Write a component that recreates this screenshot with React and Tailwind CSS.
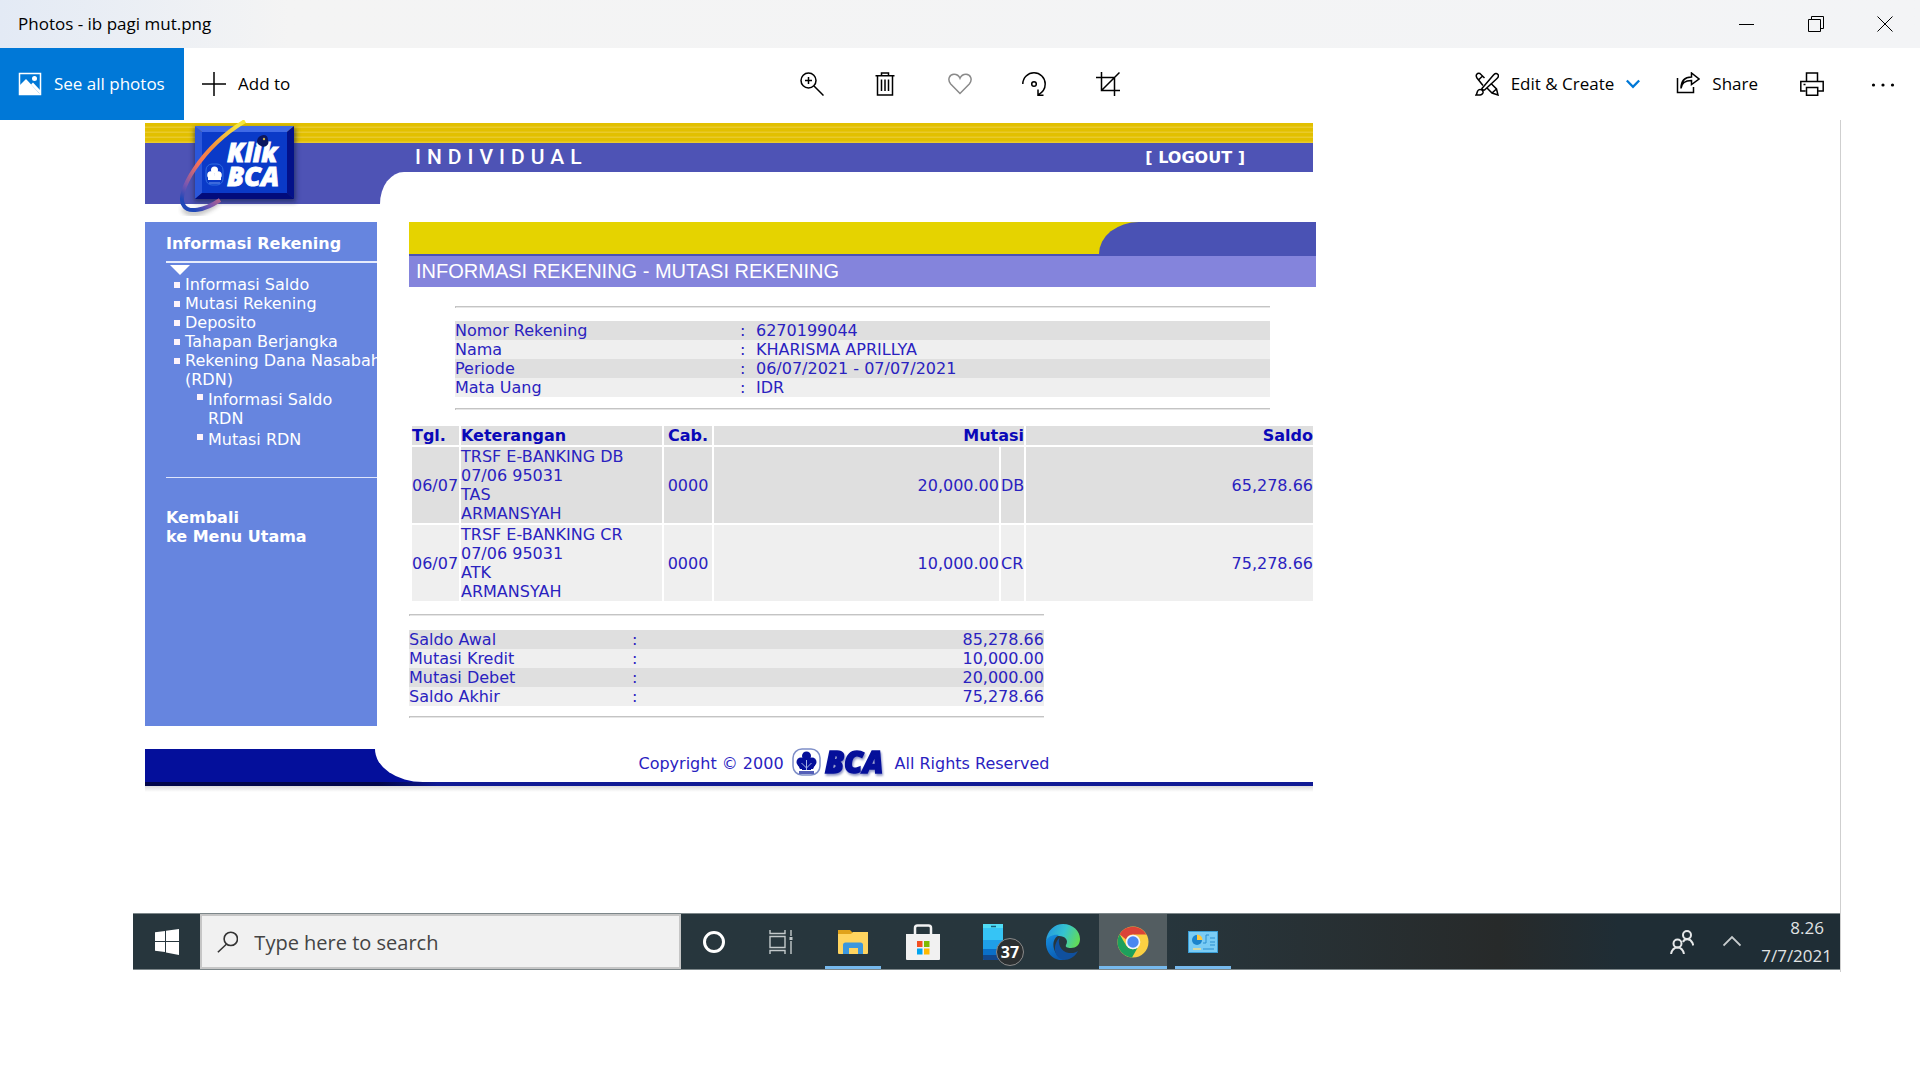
import React from "react";

const menuItems = ["Informasi Saldo", "Mutasi Rekening", "Deposito", "Tahapan Berjangka"];

const accountInfo = [
  ["Nomor Rekening", "6270199044"],
  ["Nama", "KHARISMA APRILLYA"],
  ["Periode", "06/07/2021 - 07/07/2021"],
  ["Mata Uang", "IDR"],
];

const mutations = [
  { date: "06/07", lines: ["TRSF E-BANKING DB", "07/06 95031", "TAS", "ARMANSYAH"], branch: "0000", amount: "20,000.00", type: "DB", balance: "65,278.66" },
  { date: "06/07", lines: ["TRSF E-BANKING CR", "07/06 95031", "ATK", "ARMANSYAH"], branch: "0000", amount: "10,000.00", type: "CR", balance: "75,278.66" },
];

const summary = [
  ["Saldo Awal", "85,278.66"],
  ["Mutasi Kredit", "10,000.00"],
  ["Mutasi Debet", "20,000.00"],
  ["Saldo Akhir", "75,278.66"],
];

const STRIPE = "odd:bg-[#dfdfdf] even:bg-[#efefef]";
const CELL_STRIPE = "*:p-0 odd:*:bg-[#dfdfdf] even:*:bg-[#efefef]";

function Icon({ children, className = "", size = 24, box = "0 0 24 24", width = 1.5 }) {
  return (
    <svg width={size} height={size} viewBox={box} fill="none" stroke="currentColor" strokeWidth={width} className={className} aria-hidden="true">
      {children}
    </svg>
  );
}

function TitleBar() {
  return (
    <header className="flex h-12 items-center bg-linear-to-r from-[#e3eaf5] via-[#f4f4f4] via-15% to-[#f3f4f6] pr-px pl-[18px] text-[17px]">
      <h1 className="flex-1">Photos - ib pagi mut.png</h1>
      <button aria-label="Minimize" className="flex h-12 w-[69px] items-center justify-center">
        <Icon size={16} box="0 0 16 16" width={1}><path d="M0 8.5h15" /></Icon>
      </button>
      <button aria-label="Restore" className="flex h-12 w-[69px] items-center justify-center">
        <Icon size={16} box="0 0 16 16" width={1}><path d="M.5 3.5h12v12H.5zM3.500 3.500v-3h12v12h-3" /></Icon>
      </button>
      <button aria-label="Close" className="flex h-12 w-[69px] items-center justify-center">
        <Icon size={16} box="0 0 16 16" width={1}><path d="M.5.5l15 15M15.500.5l-15 15" /></Icon>
      </button>
    </header>
  );
}

function Toolbar() {
  return (
    <nav className="grid h-[72px] grid-cols-[1fr_auto_1fr] items-center bg-white text-[17px]">
      <div className="flex h-full items-center">
        <button className="flex h-full w-[184px] items-center gap-3 bg-[#0078d7] pl-[18px] text-white">
          <Icon>
            <path d="M1.500 1.500h21v21h-21z" strokeWidth="1.500" />
            <path d="M2 13l6-6 14 15H2z" fill="currentColor" stroke="none" />
            <path d="M13 12.500l2-2 7 7.500v4z" fill="currentColor" stroke="none" />
            <circle cx="16.500" cy="6.500" r="2.500" fill="currentColor" stroke="none" />
          </Icon>
          See all photos
        </button>
        <button className="flex h-full items-center gap-3 px-[18px]">
          <Icon width={1.5}><path d="M0 12h24M12 0v24" /></Icon>
          Add to
        </button>
      </div>
      <div className="flex items-center gap-[50px]">
        <button aria-label="Zoom">
          <Icon><circle cx="8.500" cy="8.500" r="7.500" /><path d="M14 14l9.500 9.500M5 8.500h7M8.500 5v7" /></Icon>
        </button>
        <button aria-label="Delete">
          <Icon><path d="M1.500 3.800h19M7.500 3.500V1h7v2.500M3.500 4v19h15V4M7.500 7.500V19M11 7.500V19M14.500 7.500V19" /></Icon>
        </button>
        <button aria-label="Add to favorites" className="text-[#8a8a8a]">
          <Icon><path d="M12 21.500L2.700 12C-1 7.500 1.500 2.300 6 2.300c3 0 5 1.700 6 4 1-2.300 3-4 6-4 4.500 0 7 5.200 3.300 9.700z" /></Icon>
        </button>
        <button aria-label="Rotate">
          <Icon><path d="M.8 12C.8 5.500 6 .8 12 .8S23.200 5.800 23.200 12c0 4.500-2.700 8.500-7 10.800M16 17.500v5.700h5.500" /><circle cx="12" cy="12" r="2.300" /></Icon>
        </button>
        <button aria-label="Crop">
          <Icon><path d="M0 5.500h18.500V24M5.500 0v18.500H24M5.500 18.500L23.500.5" /></Icon>
        </button>
      </div>
      <div className="flex items-center justify-end pr-[25px]">
        <button className="flex items-center gap-3">
          <Icon width={1.5}>
            <path d="M8 13.500L2 6C0 3 2.500.3 5 1.500L9.500 6M12 16l5 5 6 2-1.500-6-5.500-5.500M4 7.500L7.500 4M17 21l4.500-4" />
            <path d="M6.500 17L18.500 3c1.500-1.700 3-2 4.200-.8 1.200 1.200 1 2.800-.7 4.300L9 18.500M6.500 17L9 18.500M1 23c1.500-1.500.5-3.500 2.500-5 2-1.500 5 .5 4.500 2.700C7.500 22.500 4 23.300 1 23z" />
          </Icon>
          <span>Edit &amp; Create</span>
          <Icon size={14} box="0 0 12 12" width={2} className="text-[#0078d7]"><path d="M.7 3l5.300 5.500L11.300 3" /></Icon>
        </button>
        <button className="ml-9 flex items-center gap-3">
          <Icon><path d="M1.500 6v14.500h16V15" /><path d="M5 16.500c.5-5.500 4-8 10.500-8v4L23 7l-7.500-6v4C8 5 5 9.500 5 16.500z" /></Icon>
          Share
        </button>
        <button aria-label="Print" className="ml-[42px]">
          <Icon><path d="M6.500 9V1h11v8M5.500 19H.8V9.500h22.400V19h-4.700M6.500 15.500h11.200V23.200H6.500zM3.500 12.500h2" /></Icon>
        </button>
        <button aria-label="More" className="ml-[47px]">
          <Icon><g fill="currentColor" stroke="none"><circle cx="2.500" cy="13" r="1.600" /><circle cx="12" cy="13" r="1.600" /><circle cx="21.500" cy="13" r="1.600" /></g></Icon>
        </button>
      </div>
    </nav>
  );
}

function KlikLogo() {
  return (
    <svg width="126" height="100" viewBox="0 0 126 100" className="absolute -top-[3px] left-[33px]" role="img" aria-label="Klik BCA">
      <defs>
        <linearGradient id="orbit" x1="0.800" y1="0" x2="0.200" y2="1">
          <stop offset="0" stopColor="#f5e63c" />
          <stop offset="0.350" stopColor="#f5913c" />
          <stop offset="0.600" stopColor="#f5705a" />
          <stop offset="0.850" stopColor="#7a56b0" />
          <stop offset="1" stopColor="#1f48b8" />
        </linearGradient>
        <filter id="soft" x="-20%" y="-20%" width="140%" height="140%"><feGaussianBlur stdDeviation="2.500" /></filter>
      </defs>
      <rect x="16" y="8" width="102" height="74" fill="#16204a" opacity="0.600" filter="url(#soft)" />
      <path d="M5 88c6 9 18 6 34-5" fill="none" stroke="#444" strokeWidth="4" opacity="0.450" filter="url(#soft)" />
      <path d="M17 6h99l-7 6H24z" fill="#3f6ae6" />
      <path d="M17 6v73l7-6V12z" fill="#2b57da" />
      <path d="M116 6v73l-7-6V12z" fill="#03118a" />
      <path d="M17 79h99l-7-6H24z" fill="#020c7c" />
      <path d="M24 12h85v61H24z" fill="#0a3ac8" />
      <path d="M67 1C24 27-4 74 6 86c4 7 20 5 36-6" fill="none" stroke="url(#orbit)" strokeWidth="4" />
      <g fill="#fff" stroke="#fff" strokeWidth="0.800" fontFamily="'Open Sans', sans-serif" fontWeight="800" fontStyle="italic">
        <text x="49" y="42" fontSize="26">Klik</text>
        <text x="49" y="66" fontSize="27">BCA</text>
      </g>
      <path d="M80 18c5-5 10-3 10 2 2 5-3 8-7 6s-5-4-3-8z" fill="#0b1660" />
      <circle cx="86" cy="19" r="1.200" fill="#ccb34a" />
      <rect x="28" y="44" width="17" height="21" rx="6" fill="none" stroke="#2f6ce0" />
      <g fill="#fff"><circle cx="36.500" cy="50" r="3.500" /><circle cx="33" cy="55" r="3.800" /><circle cx="40" cy="55" r="3.800" /><path d="M30 56h13v4H30z" /></g>
      <path d="M31 63h11" stroke="#6f9af0" />
    </svg>
  );
}

function BankHeader() {
  return (
    <div className="relative mr-[3px]">
      <div className="h-5 bg-[repeating-linear-gradient(to_bottom,#e2c000_0px,#e2c000_3px,#e9ca2c_4px,#e9ca2c_5px)]" />
      <div className="flex h-[29px] items-center bg-[#4e53b5] pr-[68px] pl-[270px] text-white">
        <span className="flex-1 font-[Roboto] text-[21px] leading-none font-medium tracking-[6px]">INDIVIDUAL</span>
        <a href="#logout" className="font-['DejaVu_Sans'] text-base leading-[19px] font-bold">[ LOGOUT ]</a>
      </div>
      <div className="flex h-8 bg-[#4e53b5]">
        <div className="w-[235px]" />
        <div className="flex-1 rounded-tl-[24px_32px] bg-white" />
      </div>
      <KlikLogo />
    </div>
  );
}

function Bullet({ className = "mt-[7px]" }) {
  return <span className={`size-1.5 shrink-0 bg-[#fdf3fb] ${className}`} />;
}

function Sidebar() {
  return (
    <aside className="w-[232px] shrink-0 bg-[#6685df] pt-3 pl-[21px] text-white">
      <h2 className="font-bold">Informasi Rekening</h2>
      <div className="mt-2 h-[2px] bg-[#e6ecfc]" />
      <svg width="20" height="10" viewBox="0 0 20 10" className="mt-[2px] ml-1" aria-hidden="true"><path d="M0 0h20L10 10z" fill="#fff" /></svg>
      <ul className="pl-2 whitespace-nowrap">
        {menuItems.map((item) => (
          <li key={item} className="flex gap-[5px]"><Bullet /><a href="#menu">{item}</a></li>
        ))}
        <li className="flex gap-[5px]"><Bullet /><a href="#menu">Rekening Dana Nasabah<br />(RDN)</a></li>
      </ul>
      <ul className="flex flex-col gap-[2px] pt-px pl-[31px]">
        <li className="flex gap-[5px]"><Bullet className="mt-1" /><a href="#menu">Informasi Saldo<br />RDN</a></li>
        <li className="flex gap-[5px]"><Bullet className="mt-1" /><a href="#menu">Mutasi RDN</a></li>
      </ul>
      <div className="mt-7 h-px bg-[#dfe6fb]" />
      <a href="#back" className="mt-[30px] block font-bold">Kembali<br />ke Menu Utama</a>
    </aside>
  );
}

function Rule({ className }) {
  return <hr className={`h-[2px] border-0 border-t border-l border-[#c4c4c4] bg-[#e6e6e6] ${className}`} />;
}

function Statement() {
  return (
    <main className="ml-8 min-w-0 flex-1 pb-2 text-[#2a22bf]">
      <div className="flex h-8 bg-[#e5d300]">
        <div className="flex-1" />
        <div className="w-[217px] rounded-tl-[40px_32px] bg-[#4a52b4]" />
      </div>
      <div className="h-[33px] border-t-2 border-[#4a52b4] bg-[#8484dc] pl-[7px]">
        <h2 className="font-['Liberation_Sans'] text-xl leading-[30px] text-white">INFORMASI REKENING - MUTASI REKENING</h2>
      </div>

      <div className="mr-[46px] ml-[46px]">
        <Rule className="mt-[19px]" />
        <table className="mt-[13px] w-full border-collapse">
          <tbody>
            {accountInfo.map(([label, value]) => (
              <tr key={label} className={STRIPE}>
                <th scope="row" className="w-[285px] p-0 text-left font-normal">{label}</th>
                <td className="w-4 p-0">:</td>
                <td className="p-0">{value}</td>
              </tr>
            ))}
          </tbody>
        </table>
        <Rule className="mt-[11px]" />
      </div>

      <div className="mt-[14px] px-px">
        <table className="w-full table-fixed border-separate border-spacing-[2px]">
          <colgroup>
            <col className="w-[47px]" />
            <col className="w-[201px]" />
            <col className="w-12" />
            <col />
            <col className="w-[23px]" />
            <col className="w-[287px]" />
          </colgroup>
          <thead className="text-[#0a08b8]">
            <tr className="*:bg-[#dfdfdf] *:p-0">
              <th className="text-left">Tgl.</th>
              <th className="text-left">Keterangan</th>
              <th>Cab.</th>
              <th colSpan={2} className="text-right">Mutasi</th>
              <th className="text-right">Saldo</th>
            </tr>
          </thead>
          <tbody>
            {mutations.map((m) => (
              <tr key={m.type} className={`${STRIPE} *:bg-inherit *:p-0`}>
                <td>{m.date}</td>
                <td>{m.lines.map((line) => <div key={line}>{line}</div>)}</td>
                <td className="text-center">{m.branch}</td>
                <td className="text-right">{m.amount}</td>
                <td>{m.type}</td>
                <td className="text-right">{m.balance}</td>
              </tr>
            ))}
          </tbody>
        </table>
      </div>

      <div className="w-[70%]">
        <Rule className="mt-[11px]" />
        <table className="mt-[14px] w-full border-collapse">
          <tbody>
            {summary.map(([label, value]) => (
              <tr key={label} className={STRIPE}>
                <th scope="row" className="w-[223px] p-0 text-left font-normal">{label}</th>
                <td className="p-0">:</td>
                <td className="p-0 text-right">{value}</td>
              </tr>
            ))}
          </tbody>
        </table>
        <Rule className="mt-[10px]" />
      </div>
    </main>
  );
}

function BcaMark() {
  return (
    <svg width="98" height="34" viewBox="0 0 98 34" role="img" aria-label="BCA">
      <rect x="1" y="3" width="27" height="26" rx="9" fill="#fff" stroke="#7f8fc8" strokeWidth="1.500" />
      <g fill="#050f9a">
        <circle cx="14.500" cy="10" r="4.500" /><circle cx="9" cy="16" r="4.500" /><circle cx="20" cy="16" r="4.500" />
        <path d="M10 12h9v12h-9zM6 19h17l-2 4H8z" /><path d="M7 25h15v3H7z" fill="#5560b8" />
      </g>
      <path d="M14.500 24V14M14.500 22l-5-5M14.500 22l5-5" stroke="#a9b5e6" strokeWidth="1" />
      <text x="33" y="27" fontSize="30" fontWeight="800" fontStyle="italic" fontFamily="'Open Sans', sans-serif" fill="#050f9a" stroke="#050f9a" strokeWidth="1.500" className="drop-shadow-[1px_2px_1px_#8c93c4]">BCA</text>
    </svg>
  );
}

function BankFooter() {
  return (
    <footer className="mt-[23px] mr-[3px]">
      <div className="flex h-[33px] bg-[#040f9b]">
        <div className="w-[230px]" />
        <div className="flex flex-1 items-center justify-center rounded-bl-[48px_33px] bg-white pb-[5px] text-[#2a22bf]">
          <p className="flex items-center whitespace-nowrap">
            <span className="mr-2">Copyright © 2000</span>
            <BcaMark />
            <span className="ml-[5px]">All Rights Reserved</span>
          </p>
        </div>
      </div>
      <div className="h-1 bg-linear-to-r from-[#02064a] from-20% to-[#101a94] to-25%" />
      <div className="h-1.5 bg-linear-to-b from-[#dcdcdc] to-white" />
    </footer>
  );
}

function TaskButton({ label, active, open, children }) {
  return (
    <button aria-label={label} className={`relative flex h-full w-[68px] items-center justify-center ${active ? "bg-[#535d61]" : ""}`}>
      {children}
      {open && <span className={`absolute bottom-0 h-[3px] bg-[#76b9ed] ${active ? "inset-x-0" : "inset-x-[6px]"}`} />}
    </button>
  );
}

function Taskbar() {
  return (
    <div className="mt-[121px] flex h-[57px] border-y border-[#7d878a] bg-linear-to-r from-[#27363d] from-60% via-[#272a2a] via-80% to-[#1f2d35] to-87% font-['Open_Sans'] text-white">
      <button aria-label="Start" className="flex w-[67px] items-center justify-center">
        <svg width="24" height="26" viewBox="0 0 24 26" fill="#fff" aria-hidden="true">
          <path d="M0 3.300l10-1.300V12H0zM11 1.800L24 0v12H11zM0 13h10v10L0 21.800zM11 13h13v13l-13-2.500z" />
        </svg>
      </button>
      <label className="flex w-[481px] items-center border-2 border-[#c6c6c6] bg-[#f1f1f1] text-[#333]">
        <Icon width={1.8} className="ml-[15px]"><circle cx="15.500" cy="8.500" r="7.500" /><path d="M10.500 14.500L1 23.500" /></Icon>
        <input aria-label="Search" placeholder="Type here to search" className="mt-[3px] ml-4 w-full bg-transparent text-xl outline-none placeholder:text-[#444]" />
      </label>
      <button aria-label="Cortana" className="flex w-[66px] items-center justify-center">
        <Icon width={3}><circle cx="12" cy="12" r="9.500" /></Icon>
      </button>
      <button aria-label="Task View" className="mr-1 flex w-[68px] items-center justify-center text-[#c3c9cb]">
        <Icon width={1.4}><path d="M1 6.500h15v11H1zM1 0v3.500h15V0M1 24v-3.500h15V24M22 0v6M22 11v13" /><path d="M20.500 7h3v3h-3z" fill="currentColor" stroke="none" /></Icon>
      </button>
      <div className="flex gap-[2px]">
        <TaskButton label="File Explorer" open>
          <svg width="32" height="26" viewBox="0 0 32 26" aria-hidden="true">
            <path d="M1 1h12l3 3h15v20H1z" fill="#e0a21a" />
            <path d="M1 5h13l2-2h15v21a1 1 0 01-1 1H2a1 1 0 01-1-1z" fill="#ffd45f" />
            <path d="M6 25V16q0-2.500 2.500-2.500h15Q26 13.500 26 16v9h-5v-6h-9v6z" fill="#3b97de" />
          </svg>
        </TaskButton>
        <TaskButton label="Microsoft Store">
          <svg width="34" height="36" viewBox="0 0 34 36" aria-hidden="true">
            <path d="M9 12V4q0-2.500 2.500-2.500h11Q25 1.500 25 4v8" fill="none" stroke="#f2f2f2" strokeWidth="2.500" />
            <path d="M0 10h34v25a1 1 0 01-1 1H1a1 1 0 01-1-1z" fill="#f1f1f1" />
            <path d="M11 17h5.500v6H11z" fill="#f25022" /><path d="M18 17h5.500v6H18z" fill="#7fba00" />
            <path d="M11 24.500h5.500v6H11z" fill="#00a4ef" /><path d="M18 24.500h5.500v6H18z" fill="#ffb900" />
          </svg>
        </TaskButton>
        <TaskButton label="Your Phone">
          <svg width="20" height="36" viewBox="0 0 20 36" aria-hidden="true">
            <rect width="20" height="36" rx="1.500" fill="#1f9fe8" />
            <path d="M0 2q0-2 2-2h16q2 0 2 2v14H0z" fill="#36c4f5" /><path d="M0 0h20v4H0z" fill="#50dcf5" />
            <path d="M0 25h20v6H0z" fill="#0a6fc8" /><path d="M0 31h20v4q0 1-1 1H1q-1 0-1-1z" fill="#12478c" /><path d="M8 2.500h5" stroke="#16607e" strokeWidth="1.500" />
          </svg>
          <span className="absolute top-6 left-[37px] flex size-7 items-center justify-center rounded-full border border-[#8a8a8a] bg-[#2b2f31] text-base font-bold">37</span>
        </TaskButton>
        <TaskButton label="Microsoft Edge">
          <svg width="34" height="36" viewBox="0 0 34 36" aria-hidden="true">
            <defs>
              <linearGradient id="edgeTop" x1="0" y1="0.300" x2="1" y2="0.600"><stop offset="0" stopColor="#2599e0" /><stop offset="0.500" stopColor="#35c3d0" /><stop offset="1" stopColor="#63dc55" /></linearGradient>
              <linearGradient id="edgeLow" x1="0" y1="0" x2="0.400" y2="1"><stop offset="0" stopColor="#1690e0" /><stop offset="1" stopColor="#0a5cb4" /></linearGradient>
            </defs>
            <path d="M0 17C1 6 9 0 17 0c10 0 17 7 17 15 0 6-4 9-9 9-4 0-6-1-5-3 3-5-1-9-7-9-5 0-10 2-13 5z" fill="url(#edgeTop)" />
            <path d="M0 17c2-5 8-7 13-6-4 2-7 7-5 14 2 6 6 10 12 11C9 38-1 30 0 17z" fill="url(#edgeLow)" />
            <path d="M14 13c-3 5 0 15 9 16 4 .4 7-.5 9-2-3 6-9 9-14 9C9 35 5 22 14 13z" fill="#10509e" />
          </svg>
        </TaskButton>
        <TaskButton label="Google Chrome" open active>
          <svg width="32" height="32" viewBox="0 0 32 32" aria-hidden="true">
            <circle cx="16" cy="16" r="15.500" fill="#fbd043" />
            <path d="M2.600 8.200A15.500 15.500 0 0129.400 8.500H16a7.500 7.500 0 00-7 5z" fill="#db4437" />
            <path d="M2.600 8.200A15.500 15.500 0 0015 31.500l6-10.500a7.500 7.500 0 01-11.500-1z" fill="#1da05c" />
            <circle cx="16" cy="16" r="7.300" fill="#f3f6fb" /><circle cx="16" cy="16" r="5.700" fill="#4a86f0" />
          </svg>
        </TaskButton>
        <TaskButton label="Control Panel" open>
          <svg width="30" height="22" viewBox="0 0 30 22" aria-hidden="true">
            <rect x="0.500" y="0.500" width="29" height="21" fill="#7accf5" stroke="#3a9ed6" />
            <circle cx="9" cy="9" r="5" fill="#1b83cc" /><path d="M9 9V3.500A5.500 5.500 0 0114.500 9z" fill="#ffc73c" />
            <path d="M15 12h3V4h3M22 7h5M22 11h5M22 14h5M15 18h11" stroke="#2b8fd0" fill="none" /><path d="M5 18h8" stroke="#f5dc8a" strokeWidth="1.500" />
          </svg>
        </TaskButton>
      </div>
      <div className="ml-auto flex items-center pr-2">
        <button aria-label="People" className="mr-[29px]">
          <Icon width={2} className="text-[#e6e8e9]"><circle cx="17" cy="5" r="4" /><circle cx="7.500" cy="13.500" r="4" /><path d="M13 12c1.500-3.500 7-4 9.500 1l.8 2.500M1 24c1-4.500 3-6.500 6.500-6.500S13 19.500 14 24" /></Icon>
        </button>
        <button aria-label="Show hidden icons" className="mr-5">
          <Icon size={18} box="0 0 18 18" width={1.8} className="text-[#c8ccce]"><path d="M.5 12.500L9 4l8.500 8.500" /></Icon>
        </button>
        <p className="text-right text-[17px] leading-7 text-[#e0e3e4]">
          <span className="block pr-2">8.26</span>
          <span className="block">7/7/2021</span>
        </p>
      </div>
    </div>
  );
}

export default function App() {
  return (
    <div className="min-h-screen overflow-x-hidden bg-white font-['Open_Sans',sans-serif] text-black">
      <TitleBar />
      <Toolbar />
      <section aria-label="ib pagi mut.png" className="mr-[79px] ml-[133px] border-r border-[#cfcfcf] pt-[3px] pb-[2px]">
        <div className="ml-3 max-w-[1171px] font-['DejaVu_Sans',sans-serif] text-base leading-[19px]">
          <BankHeader />
          <div className="mt-[18px] flex">
            <Sidebar />
            <Statement />
          </div>
          <BankFooter />
        </div>
        <Taskbar />
      </section>
    </div>
  );
}
